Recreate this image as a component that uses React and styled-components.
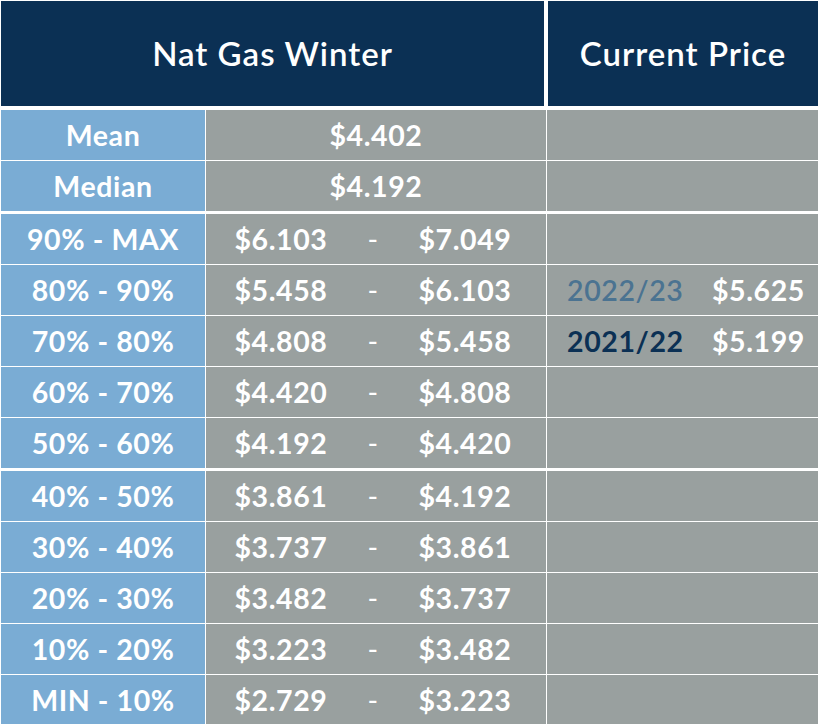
import styled, { createGlobalStyle } from 'styled-components';

const GlobalStyle = createGlobalStyle`
  html, body {
    margin: 0;
    padding: 0;
    background: #ffffff;
  }
  body {
    font-family: 'Lato', 'Open Sans', sans-serif;
    -webkit-font-smoothing: antialiased;
  }
`;

const NAVY = '#0b3054';
const SKY = '#7aacd4';
const GREY = '#99a09f';

const summary = [
  { label: 'Mean', value: '$4.402' },
  { label: 'Median', value: '$4.192' },
];

const bands = [
  { label: '90% - MAX', low: '$6.103', high: '$7.049', group: true },
  { label: '80% - 90%', low: '$5.458', high: '$6.103', year: '2022/23', price: '$5.625', tone: 'past' },
  { label: '70% - 80%', low: '$4.808', high: '$5.458', year: '2021/22', price: '$5.199', tone: 'prior' },
  { label: '60% - 70%', low: '$4.420', high: '$4.808' },
  { label: '50% - 60%', low: '$4.192', high: '$4.420' },
  { label: '40% - 50%', low: '$3.861', high: '$4.192', group: true },
  { label: '30% - 40%', low: '$3.737', high: '$3.861' },
  { label: '20% - 30%', low: '$3.482', high: '$3.737' },
  { label: '10% - 20%', low: '$3.223', high: '$3.482' },
  { label: 'MIN - 10%', low: '$2.729', high: '$3.223' },
];

const App = () => {
  return (
    <>
      <GlobalStyle />
      <Page>
        <Header>
          <HeadCell>Nat Gas Winter</HeadCell>
          <HeadCell>Current Price</HeadCell>
        </Header>
        <Body>
          {summary.map((row) => (
            <Row key={row.label}>
              <Label>{row.label}</Label>
              <ValueCell>
                <Single>{row.value}</Single>
              </ValueCell>
              <PriceCell />
            </Row>
          ))}
          {bands.map((row) => (
            <Row key={row.label} $groupStart={row.group}>
              <Label>{row.label}</Label>
              <ValueCell>
                <Range>
                  <span>{row.low}</span>
                  <Dash>-</Dash>
                  <span>{row.high}</span>
                </Range>
              </ValueCell>
              <PriceCell>
                {row.year && (
                  <>
                    <Year $tone={row.tone}>{row.year}</Year>
                    <span>{row.price}</span>
                  </>
                )}
              </PriceCell>
            </Row>
          ))}
        </Body>
      </Page>
    </>
  );
};

export default App;

const Page = styled.div`
  width: 817px;
  padding: 1px 2px 0 1px;
  background: #ffffff;
`;

const Header = styled.div`
  display: grid;
  grid-template-columns: 543px 270px;
  column-gap: 4px;
  height: 105px;
`;

const HeadCell = styled.div`
  display: flex;
  align-items: center;
  justify-content: center;
  background: ${NAVY};
  color: #ffffff;
  font-size: 33px;
  font-weight: 600;
  letter-spacing: 1px;
  padding-bottom: 2px;
`;

const Body = styled.div`
  display: flex;
  flex-direction: column;
  gap: 1px;
  margin-top: 4px;
`;

const Row = styled.div`
  display: grid;
  grid-template-columns: 204px 340px 271px;
  column-gap: 1px;
  height: 50px;
  margin-top: ${({ $groupStart }) => ($groupStart ? '2px' : '0')};
  color: #ffffff;
  font-size: 28.5px;
  font-weight: 700;
  letter-spacing: 0.6px;
`;

const Label = styled.div`
  display: flex;
  align-items: center;
  justify-content: center;
  background: ${SKY};
`;

const ValueCell = styled.div`
  display: flex;
  align-items: center;
  background: ${GREY};
`;

const Single = styled.div`
  width: 100%;
  text-align: center;
`;

const Range = styled.div`
  display: grid;
  grid-template-columns: 142px 30px 142px;
  column-gap: 6px;
  padding-left: 4px;
  text-align: center;
`;

const Dash = styled.span`
  font-weight: 400;
`;

const PriceCell = styled.div`
  display: flex;
  align-items: center;
  justify-content: space-between;
  padding: 0 13px 0 20px;
  background: ${GREY};
`;

const Year = styled.span`
  color: ${({ $tone }) => ($tone === 'past' ? '#4b7391' : NAVY)};
  font-weight: ${({ $tone }) => ($tone === 'past' ? 600 : 700)};
`;
